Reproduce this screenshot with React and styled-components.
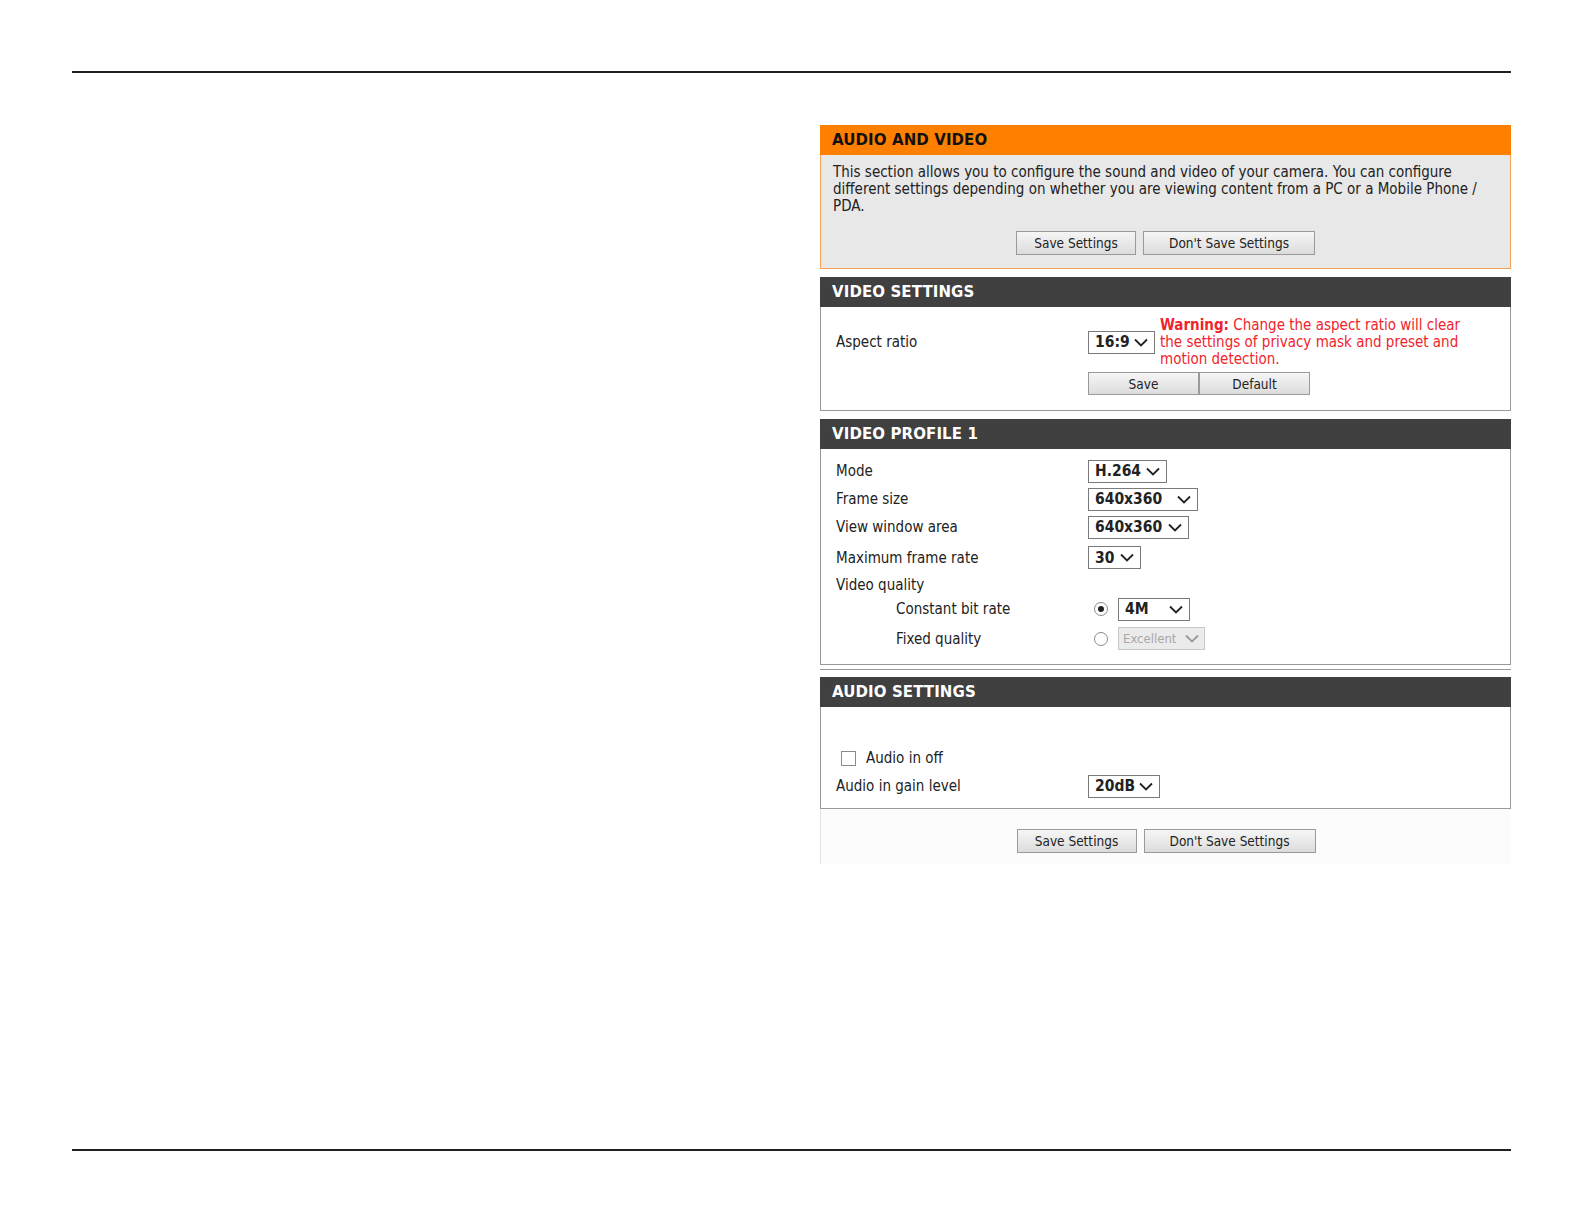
import React from "react";
import styled, { createGlobalStyle } from "styled-components";

const GlobalStyle = createGlobalStyle`
  html, body {
    margin: 0;
    padding: 0;
    background: #ffffff;
  }
  body {
    font-family: "DejaVu Sans Condensed", "Liberation Sans", sans-serif;
    color: #222;
  }
`;

const Page = styled.div`
  box-sizing: border-box;
  height: 1224px;
  padding: 71px 73px 73px 72px;
  display: flex;
  flex-direction: column;
`;

const Rule = styled.div`
  height: 2px;
  background: #231f20;
  margin-top: ${(p) => (p.$bottom ? "auto" : "0")};
`;

const Content = styled.div`
  display: flex;
  justify-content: flex-end;
  margin-top: 52px;
`;

const Panel = styled.div`
  width: 691px;
  display: flex;
  flex-direction: column;
`;

const Header = styled.div`
  height: 30px;
  line-height: 31px;
  padding-left: 12px;
  font-family: "DejaVu Sans", "Liberation Sans", sans-serif;
  font-weight: bold;
  font-size: 15px;
  letter-spacing: 0.1px;
  background: ${(p) => (p.$orange ? "#ff7f00" : "#404040")};
  color: ${(p) => (p.$orange ? "#111" : "#fff")};
  margin-top: ${(p) => (p.$gap ? p.$gap : 0)}px;
`;

const IntroBody = styled.div`
  background: #e8e8e8;
  border: 1px solid #f6a055;
  border-top: none;
  padding: 9px 12px 13px 12px;
  font-size: 15px;
  line-height: 17px;
`;

const Body = styled.div`
  border: 1px solid #999;
  border-top: none;
  background: #fff;
  padding: ${(p) => p.$pad || "0"};
  padding-left: 15px;
`;

const ButtonBar = styled.div`
  display: flex;
  justify-content: center;
  gap: 7px;
  margin-top: ${(p) => (p.$top ? p.$top : 0)}px;
`;

const Button = styled.button`
  box-sizing: border-box;
  width: ${(p) => p.$w}px;
  height: ${(p) => (p.$h ? p.$h : 24)}px;
  background: linear-gradient(#f6f6f6, #dcdcdc);
  border: 1px solid #9a9a9a;
  border-radius: 0;
  font-family: "DejaVu Sans Condensed", "Liberation Sans", sans-serif;
  font-size: 13.5px;
  color: #222;
  padding: 0;
  cursor: pointer;
`;

const Row = styled.div`
  display: flex;
  align-items: center;
  height: ${(p) => (p.$h ? `${p.$h}px` : "auto")};
  margin-top: ${(p) => (p.$top ? p.$top : 0)}px;
  font-size: 15px;
`;

const Label = styled.div`
  width: ${(p) => (p.$indent ? 252 - 60 : 252)}px;
  padding-left: ${(p) => (p.$indent ? 60 : 0)}px;
  flex-shrink: 0;
`;

const Control = styled.div`
  display: flex;
  align-items: center;
  gap: ${(p) => (p.$gap ? p.$gap : 0)}px;
`;

const SelectBox = styled.div`
  box-sizing: border-box;
  width: ${(p) => p.$w}px;
  height: 23px;
  display: flex;
  align-items: center;
  justify-content: space-between;
  padding: ${(p) => (p.$disabled ? "0 5px 0 4px" : "0 6px")};
  border: 1px solid ${(p) => (p.$disabled ? "#c8c8c8" : "#7a7a7a")};
  background: ${(p) => (p.$disabled ? "#ebebeb" : "#fff")};
  color: ${(p) => (p.$disabled ? "#a8a8a8" : "#222")};
  font-weight: ${(p) => (p.$disabled ? "normal" : "bold")};
  font-size: ${(p) => (p.$disabled ? 13 : 15.5)}px;
  flex-shrink: 0;
`;

const Chevron = ({ color }) => (
  <svg width="14" height="9" viewBox="0 0 14 9">
    <path d="M1 1.5 L7 7.5 L13 1.5" fill="none" stroke={color} strokeWidth="1.8" />
  </svg>
);

const Select = ({ value, w, disabled }) => (
  <SelectBox $w={w} $disabled={disabled}>
    <span>{value}</span>
    <Chevron color={disabled ? "#9a9a9a" : "#222"} />
  </SelectBox>
);

const Warning = styled.div`
  color: #f0242b;
  font-size: 15px;
  line-height: 17px;
  margin-top: 1px;
  b {
    font-weight: bold;
  }
`;

const Radio = styled.span`
  box-sizing: border-box;
  width: 14px;
  height: 14px;
  border-radius: 50%;
  border: 1px solid #8a8a8a;
  background: #fff;
  margin-left: 6px;
  display: flex;
  align-items: center;
  justify-content: center;
  &::after {
    content: "";
    width: 6px;
    height: 6px;
    border-radius: 50%;
    background: ${(p) => (p.$checked ? "#222" : "transparent")};
  }
`;

const Checkbox = styled.span`
  box-sizing: border-box;
  width: 15px;
  height: 15px;
  border: 1px solid #8a8a8a;
  background: #fff;
  margin: 0 10px 0 5px;
`;

const Divider = styled.div`
  height: 1px;
  background: #999;
  margin: 4px 0 7px 0;
`;

const Footer = styled.div`
  background: #fcfcfc;
  border-left: 1px solid #e2e2e2;
  padding: 20px 0 11px 0;
`;

const profileRows = [
  { label: "Mode", h: 28, value: "H.264", w: 79 },
  { label: "Frame size", h: 28, value: "640x360", w: 110 },
  { label: "View window area", h: 28, value: "640x360", w: 101 },
  { label: "Maximum frame rate", h: 33, value: "30", w: 53 },
];

export default function App() {
  return (
    <>
      <GlobalStyle />
      <Page>
        <Rule />
        <Content>
          <Panel>
            <Header $orange>AUDIO AND VIDEO</Header>
            <IntroBody>
              This section allows you to configure the sound and video of your camera. You can configure
              <br />
              different settings depending on whether you are viewing content from a PC or a Mobile Phone /
              <br />
              PDA.
              <ButtonBar $top={16}>
                <Button $w={120}>Save Settings</Button>
                <Button $w={172}>Don't Save Settings</Button>
              </ButtonBar>
            </IntroBody>

            <Header $gap={8}>VIDEO SETTINGS</Header>
            <Body $pad="9px 0 15px 0">
              <Row>
                <Label>Aspect ratio</Label>
                <Control $gap={5}>
                  <Select value="16:9" w={67} />
                  <Warning>
                    <b>Warning:</b> Change the aspect ratio will clear
                    <br />
                    the settings of privacy mask and preset and
                    <br />
                    motion detection.
                  </Warning>
                </Control>
              </Row>
              <Row $top={4}>
                <Label />
                <Control>
                  <Button $w={111} $h={23}>Save</Button>
                  <Button $w={111} $h={23}>Default</Button>
                </Control>
              </Row>
            </Body>

            <Header $gap={8}>VIDEO PROFILE 1</Header>
            <Body $pad="8px 0 9px 0">
              {profileRows.map((r) => (
                <Row key={r.label} $h={r.h}>
                  <Label>{r.label}</Label>
                  <Control>
                    <Select value={r.value} w={r.w} />
                  </Control>
                </Row>
              ))}
              <Row $h={22}>
                <Label>Video quality</Label>
              </Row>
              <Row $h={26}>
                <Label $indent>Constant bit rate</Label>
                <Control $gap={10}>
                  <Radio $checked />
                  <Select value="4M" w={72} />
                </Control>
              </Row>
              <Row $h={33}>
                <Label $indent>Fixed quality</Label>
                <Control $gap={10}>
                  <Radio />
                  <Select value="Excellent" w={87} disabled />
                </Control>
              </Row>
            </Body>
            <Divider />

            <Header>AUDIO SETTINGS</Header>
            <Body $pad="38px 0 7px 0">
              <Row $h={26}>
                <Checkbox />
                Audio in off
              </Row>
              <Row $h={30}>
                <Label>Audio in gain level</Label>
                <Control>
                  <Select value="20dB" w={72} />
                </Control>
              </Row>
            </Body>
            <Footer>
              <ButtonBar>
                <Button $w={120}>Save Settings</Button>
                <Button $w={172}>Don't Save Settings</Button>
              </ButtonBar>
            </Footer>
          </Panel>
        </Content>
        <Rule $bottom />
      </Page>
    </>
  );
}
